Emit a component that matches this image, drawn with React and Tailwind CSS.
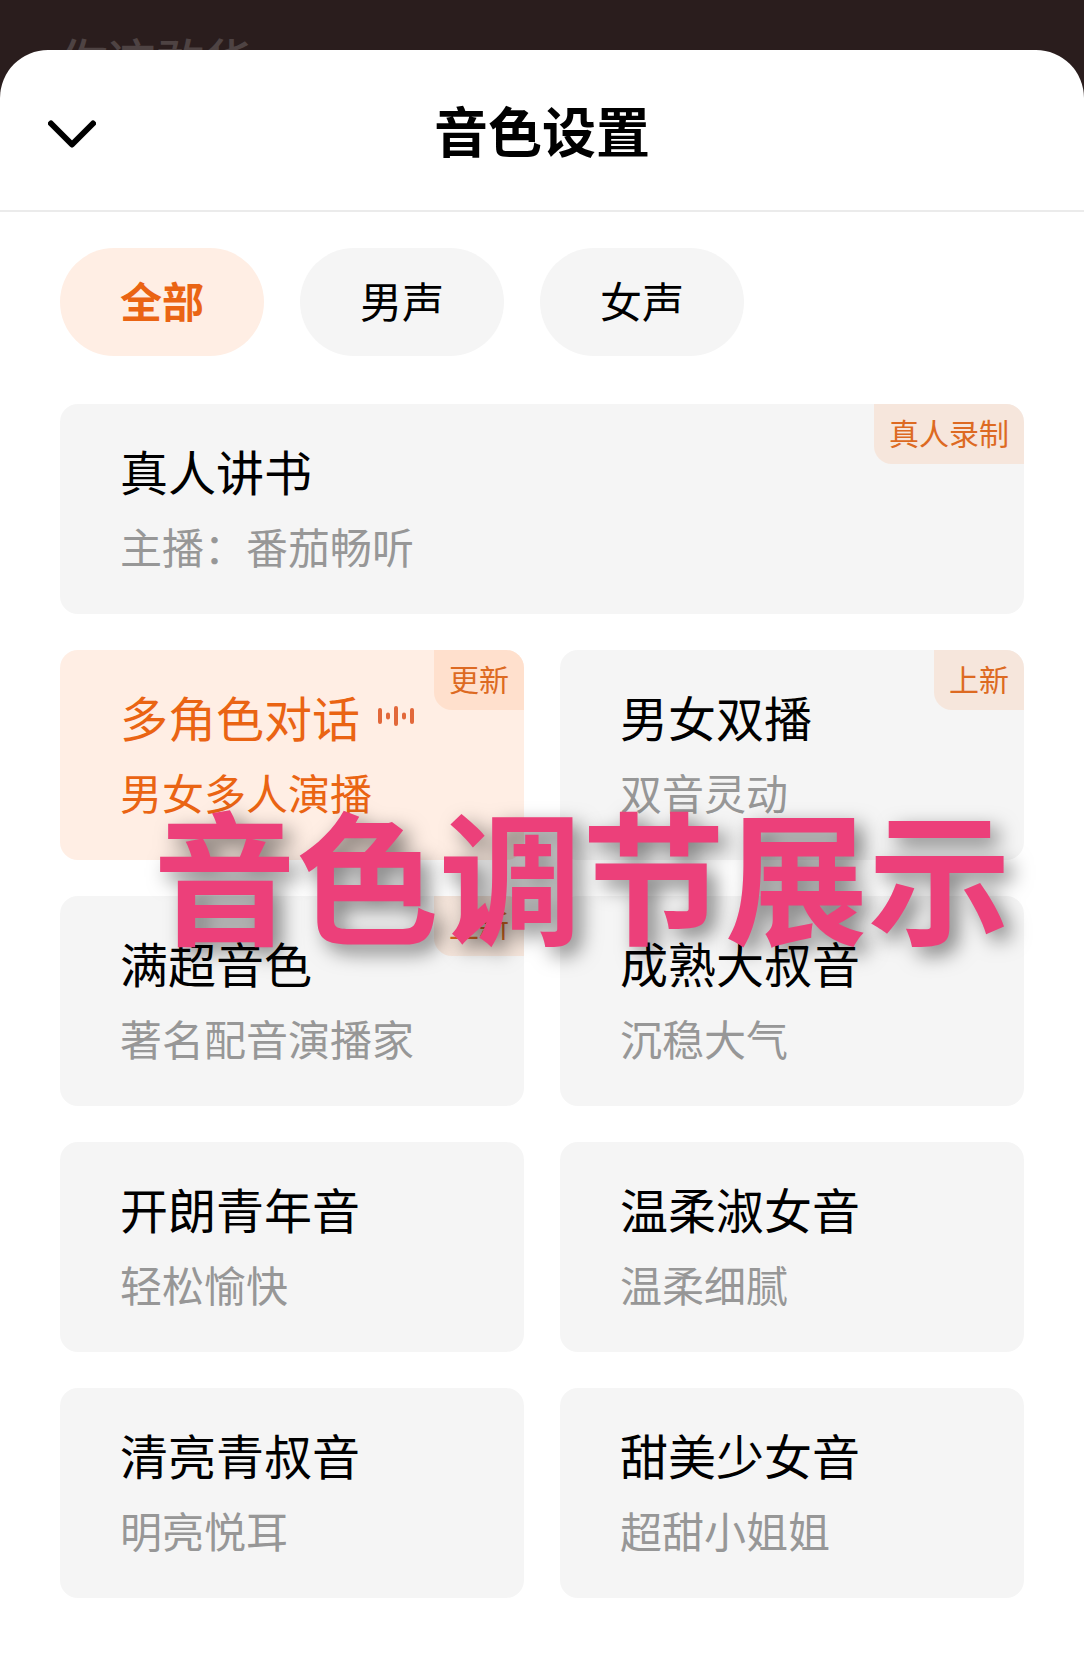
import React, { useState } from "react";

const filters = ["全部", "男声", "女声"];

const voices = [
  { name: "真人讲书", desc: "主播：番茄畅听", tag: "真人录制", wide: true },
  { name: "多角色对话", desc: "男女多人演播", tag: "更新" },
  { name: "男女双播", desc: "双音灵动", tag: "上新" },
  { name: "满超音色", desc: "著名配音演播家", tag: "上新" },
  { name: "成熟大叔音", desc: "沉稳大气" },
  { name: "开朗青年音", desc: "轻松愉快" },
  { name: "温柔淑女音", desc: "温柔细腻" },
  { name: "清亮青叔音", desc: "明亮悦耳" },
  { name: "甜美少女音", desc: "超甜小姐姐" },
];

function WaveIcon() {
  return (
    <svg
      width="36"
      height="20"
      viewBox="0 0 36 20"
      fill="none"
      stroke="#e2683a"
      strokeWidth="4"
      strokeLinecap="round"
      aria-hidden="true"
    >
      <path d="M2 4v12M10 8.5v3M18 2v16M26 8.5v3M34 4v12" />
    </svg>
  );
}

function VoiceCard({ voice, selected, onSelect }) {
  return (
    <button
      type="button"
      aria-pressed={selected}
      onClick={onSelect}
      className={`relative overflow-hidden rounded-[18px] px-15 pt-[30px] pb-[36px] text-left ${
        voice.wide ? "col-span-2" : ""
      } ${selected ? "bg-[#ffeee4] text-[#ea6413]" : "bg-[#f5f5f5] text-black"}`}
    >
      <span className="flex items-center gap-[18px] text-[48px] leading-[72px]">
        {voice.name}
        {selected && <WaveIcon />}
      </span>
      <span
        className={`mt-2 block text-[42px] leading-[64px] ${
          selected ? "" : "text-[#979797]"
        }`}
      >
        {voice.desc}
      </span>
      {voice.tag && (
        <span
          className={`absolute top-0 right-0 rounded-bl-[18px] px-[15px] pb-1 text-[30px] leading-[56px] text-[#dd6a22] ${
            selected ? "bg-[#ffe0cd]" : "bg-[#f6e6dc]"
          }`}
        >
          {voice.tag}
        </span>
      )}
    </button>
  );
}

export default function App() {
  const [filter, setFilter] = useState("全部");
  const [current, setCurrent] = useState("多角色对话");

  return (
    <div className="relative flex min-h-screen flex-col bg-[#2a1d1d] font-['Noto_Sans_CJK_SC',sans-serif]">
      {/* page behind the sheet */}
      <div className="h-[50px] overflow-hidden px-15 pt-[22px]">
        <p className="text-[48px] leading-[72px] font-medium text-[#4e4343]">
          你这敢华
        </p>
      </div>

      <main className="flex-1 rounded-t-[48px] bg-white">
        <header className="grid grid-cols-[1fr_auto_1fr] items-center border-b-2 border-[#ebebeb] px-12 py-10">
          <button type="button" aria-label="收起" className="w-12 pt-2">
            <svg
              className="block"
              width="48"
              height="28"
              viewBox="0 0 48 28"
              fill="none"
              stroke="black"
              strokeWidth="6"
              strokeLinecap="round"
              strokeLinejoin="round"
            >
              <path d="M3 3.5l21 21 21-21" />
            </svg>
          </button>
          <h1 className="text-[54px] leading-[80px] font-bold">音色设置</h1>
        </header>

        <div className="flex gap-9 px-15 pt-9">
          {filters.map((f) => (
            <button
              key={f}
              type="button"
              aria-pressed={filter === f}
              onClick={() => setFilter(f)}
              className={`rounded-full px-15 pb-1 text-[42px] leading-[104px] ${
                filter === f
                  ? "bg-[#ffeee4] font-bold text-[#ea6413]"
                  : "bg-[#f5f5f5] text-black"
              }`}
            >
              {f}
            </button>
          ))}
        </div>

        <div className="grid grid-cols-2 gap-9 px-15 pt-12 pb-[74px]">
          {voices.map((v) => (
            <VoiceCard
              key={v.name}
              voice={v}
              selected={current === v.name}
              onSelect={() => setCurrent(v.name)}
            />
          ))}
        </div>
      </main>

      {/* caption laid over the sheet */}
      <p className="pointer-events-none absolute inset-x-0 top-[772px] pl-20 text-center text-[143px] leading-[200px] font-bold whitespace-nowrap text-[#ec407a] [text-shadow:8px_8px_20px_rgba(0,0,0,0.5)]">
        音色调节展示
      </p>
    </div>
  );
}
